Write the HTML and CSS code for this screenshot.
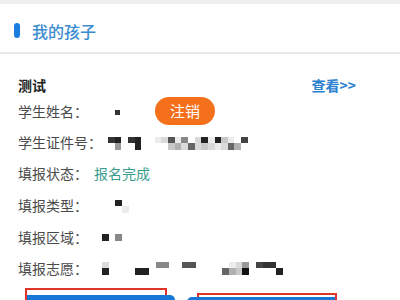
FILE: index.html
```html
<!DOCTYPE html>
<html lang="zh-CN">

<head>
    <meta charset="UTF-8">
    <title>我的孩子</title>
    <link rel="stylesheet" href="styles.css">
</head>

<body>
    <div class="topStrip"></div>
    <!-- 标题栏 -->
    <div class="titleBar">
        <span class="titleMark"></span>
        <h2>我的孩子</h2>
    </div>

    <div class="child">
        <div class="childHead">
            <b>测试</b>
            <a href="javascript:;" class="more">查看&gt;&gt;</a>
        </div>
        <ul class="info">
            <li>
                <span class="label">学生姓名：</span>
                <span class="mosaic mzName"><i class="g2"></i></span>
                <a href="javascript:;" class="cancelBtn">注销</a>
            </li>
            <li>
                <span class="label">学生证件号：</span>
                <!-- 打码的证件号 -->
                <span class="mosaic mzId">
                    <i class="g2"></i><i class="g1"></i><i></i><i class="g2"></i><i class="g1"></i><i></i><i></i><i class="gb"></i><i class="ga"></i><i class="g4"></i><i class="gb"></i><i class="g6"></i><i></i><i class="ga"></i><i class="g1"></i><i class="gb"></i><i class="g1"></i><i class="g9"></i><i class="gb"></i><i></i><i class="g3"></i>
                    <i></i><i class="g7"></i><i></i><i></i><i class="g1"></i><i></i><i></i><i></i><i></i><i class="g9"></i><i class="g8"></i><i class="ga"></i><i class="g5"></i><i class="ga"></i><i class="g9"></i><i class="ga"></i><i class="gb"></i><i class="ga"></i><i class="g5"></i><i class="g8"></i><i></i>
                </span>
            </li>
            <li>
                <span class="label">填报状态：</span>
                <span class="status">报名完成</span>
            </li>
            <li>
                <span class="label">填报类型：</span>
                <span class="mosaic mzType"><i class="g1"></i><i></i><i></i><i class="gb"></i></span>
            </li>
            <li>
                <span class="label">填报区域：</span>
                <span class="mosaic mzArea"><i class="g1"></i><i></i><i class="g6"></i></span>
            </li>
            <li>
                <span class="label">填报志愿：</span>
                <span class="mosaic mzWish">
                    <i class="ga"></i><i></i><i></i><i></i><i></i><i></i><i></i><i></i><i class="g6"></i><i class="g6"></i><i></i><i></i><i class="g4"></i><i class="g4"></i><i></i><i></i><i></i><i></i><i></i><i class="gb"></i><i class="ga"></i><i class="g7"></i><i></i><i class="g3"></i><i class="g2"></i><i class="g2"></i><i></i>
                    <i class="g1"></i><i></i><i></i><i></i><i></i><i class="g1"></i><i class="g1"></i><i></i><i></i><i></i><i></i><i></i><i></i><i></i><i></i><i></i><i></i><i></i><i class="g5"></i><i class="g8"></i><i class="g9"></i><i class="g0"></i><i></i><i></i><i></i><i></i><i class="g1"></i>
                </span>
            </li>
        </ul>
    </div>

    <!-- 底部按钮 (红框是标注) -->
    <div class="actions">
        <div class="outline outlineLeft"><a href="javascript:;" class="blueBtn btnLeft"></a></div>
        <div class="outline outlineRight"><a href="javascript:;" class="blueBtn btnRight"></a></div>
    </div>
</body>

</html>
```

FILE: styles.css
```css
* {
    margin: 0;
    padding: 0;
    list-style-type: none;
    box-sizing: border-box;
}

body {
    width: 400px;
    height: 300px;
    overflow: hidden;
    background-color: #fff;
    font-family: "Noto Sans CJK SC", "Liberation Sans", sans-serif;
    color: #4a4a4a;
}

a {
    text-decoration: none;
}

.topStrip {
    height: 4px;
    background-color: #efefef;
}

/* 标题栏 */
.titleBar {
    height: 50px;
    display: flex;
    align-items: center;
    padding: 5px 0 0 14px;
    border-bottom: 2px solid #e8e8e8;
}

.titleMark {
    width: 6px;
    height: 15px;
    border-radius: 3px;
    background-color: #1a7ee0;
}

.titleBar h2 {
    margin-left: 12px;
    font-size: 16px;
    font-weight: 500;
    color: #3a8ccf;
}

.child {
    padding: 21px 0 0 18px;
}

.childHead {
    height: 20px;
    display: flex;
    align-items: center;
    justify-content: space-between;
    padding-right: 44px;
}

.childHead b {
    font-size: 14px;
    color: #222;
}

.more {
    font-size: 14px;
    font-weight: bold;
    color: #2b80cf;
}

.info li {
    height: 31.6px;
    display: flex;
    align-items: center;
    font-size: 14px;
}

.info li:first-child {
    height: 31px;
}

.label {
    width: 76px;
    color: #4a4a4a;
}

.info li:nth-child(2) .label {
    width: 90px;
}

.status {
    color: #3a9c8c;
}

.cancelBtn {
    width: 60px;
    height: 28px;
    margin: 1px 0 0 35px;
    border-radius: 14px;
    background-color: #f4701b;
    color: #fff;
    font-size: 15px;
    line-height: 28px;
    text-align: center;
}

/* 打码 */
.mosaic {
    display: grid;
    grid-auto-rows: 6.5px;
    filter: blur(0.4px);
}

.mzName {
    grid-template-columns: 5px;
    grid-auto-rows: 5px;
    margin: 4px 0 0 21px;
}

.mzId {
    grid-template-columns: repeat(21, 6.67px);
    margin-top: 3px;
}

.mzType {
    grid-template-columns: repeat(2, 6.8px);
    margin: 3px 0 0 21px;
}

.mzArea {
    grid-template-columns: repeat(3, 6.7px);
    grid-auto-rows: 7px;
    margin: 1px 0 0 8px;
}

.mzWish {
    grid-template-columns: repeat(27, 6.7px);
    margin-left: 8px;
}

.g0 { background-color: #111; }
.g1 { background-color: #222; }
.g2 { background-color: #333; }
.g3 { background-color: #444; }
.g4 { background-color: #555; }
.g5 { background-color: #666; }
.g6 { background-color: #888; }
.g7 { background-color: #999; }
.g8 { background-color: #b0b0b0; }
.g9 { background-color: #c8c8c8; }
.ga { background-color: #dadada; }
.gb { background-color: #ececec; }

/* 底部按钮 */
.actions {
    display: flex;
    align-items: flex-start;
    gap: 30px;
    padding: 4px 0 0 25px;
}

.outline {
    width: 142px;
    height: 12px;
    border: 2px solid #e0342b;
    border-bottom: none;
}

.outlineLeft {
    padding-top: 5px;
}

.outlineRight {
    width: 140px;
    height: 7px;
    margin-top: 5px;
    padding-top: 2px;
}

.blueBtn {
    display: block;
    width: 148px;
    height: 5px;
    background-color: #1677d6;
}

.btnLeft {
    border-top-right-radius: 10px;
}

.btnRight {
    margin-left: -12px;
    border-top-left-radius: 10px;
}
```
